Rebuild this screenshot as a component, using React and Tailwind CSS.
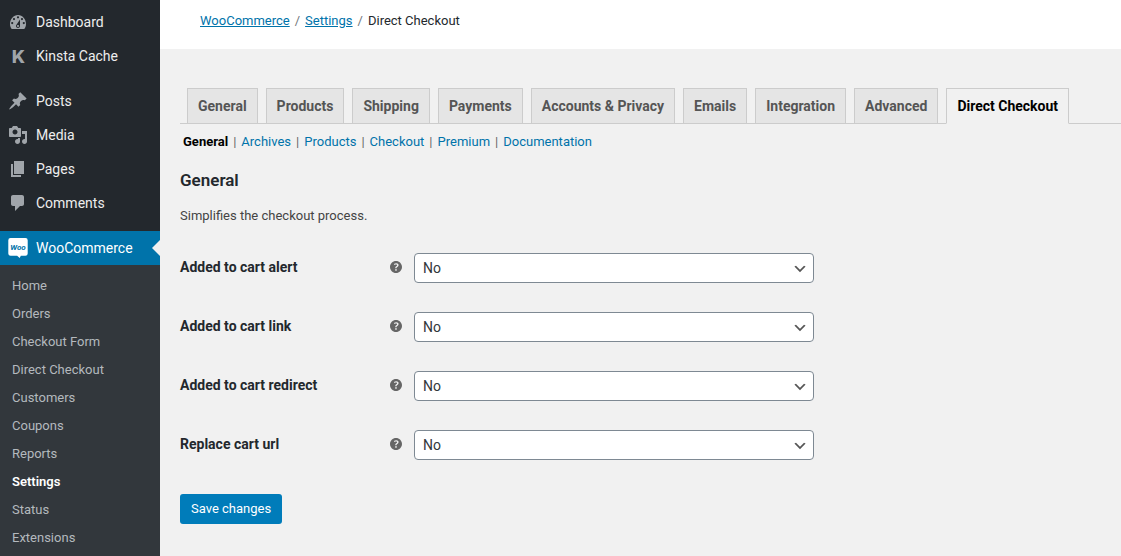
import React, { useState } from "react";

const DashboardIcon = () => (
  <svg viewBox="0 0 20 20" className="w-5 h-5 fill-current" aria-hidden="true">
    <path fillRule="evenodd" d="M3.76 17h12.48c1.1-1.37 1.76-3.11 1.76-5 0-4.970-3.580-9-8-9s-8 4.030-8 9c0 1.890.660 3.630 1.760 5zM10 4.200a1.100 1.100 0 1 1 0 2.200 1.100 1.100 0 0 1 0-2.200zM6 6a1.100 1.100 0 1 1 0 2.200A1.100 1.100 0 0 1 6 6zm8 0a1.100 1.100 0 1 1 0 2.200A1.100 1.100 0 0 1 14 6zm-5.370 6.550L12 7.500V14c0 1.100-.9 2-2 2s-2-.9-2-2c0-.570.240-1.080.630-1.450zM4.200 10a1.100 1.100 0 1 1 0 2.200 1.100 1.100 0 0 1 0-2.200zm11.600 0a1.100 1.100 0 1 1 0 2.200 1.100 1.100 0 0 1 0-2.200zM11 14c0-.550-.450-1-1-1s-1 .450-1 1 .450 1 1 1 1-.450 1-1z" />
  </svg>
);

const KinstaIcon = () => (
  <svg viewBox="0 0 20 20" className="w-5 h-5 fill-current" aria-hidden="true">
    <text x="10.500" y="16.500" textAnchor="middle" fontSize="18" fontWeight="800" fontFamily="Inter, sans-serif">K</text>
  </svg>
);

const PostsIcon = () => (
  <svg viewBox="0 0 20 20" className="w-5 h-5 fill-current" aria-hidden="true">
    <path d="M10.44 3.02l1.82-1.82 6.36 6.35-1.83 1.82c-1.05-.68-2.48-.57-3.41.36l-.75.75c-.92.93-1.04 2.35-.35 3.41l-1.83 1.82-2.41-2.41-2.8 2.79c-.42.42-3.38 2.71-3.8 2.29s1.86-3.39 2.28-3.81l2.79-2.79L4.1 9.36l1.83-1.82c1.05.69 2.48.57 3.4-.36l.75-.75c.93-.92 1.05-2.35.36-3.41z" />
  </svg>
);

const MediaIcon = () => (
  <svg viewBox="0 0 20 20" className="w-5 h-5 fill-current" aria-hidden="true">
    <path fillRule="evenodd" d="M13 11V4c0-.55-.45-1-1-1h-1.67L9 1H5L3.67 3H2c-.55 0-1 .45-1 1v7c0 .55.45 1 1 1h10c.55 0 1-.45 1-1zM7 4.5c1.38 0 2.5 1.12 2.5 2.5S8.38 9.5 7 9.5 4.5 8.38 4.5 7 5.62 4.5 7 4.5zM14 6h5v10.5c0 1.38-1.12 2.5-2.5 2.5S14 17.88 14 16.5s1.12-2.5 2.5-2.5c.17 0 .34.02.5.05V9h-3V6zm-4 8.05V13h2v3.5c0 1.38-1.12 2.5-2.5 2.5S7 17.88 7 16.5 8.12 14 9.5 14c.17 0 .34.02.5.05z" />
  </svg>
);

const PagesIcon = () => (
  <svg viewBox="0 0 20 20" className="w-5 h-5 fill-current" aria-hidden="true">
    <path d="M6 15V2h10v13H6zm-1 1h8v2H3V5h2v11z" />
  </svg>
);

const CommentsIcon = () => (
  <svg viewBox="0 0 20 20" className="w-5 h-5 fill-current" aria-hidden="true">
    <path d="M5 2h9c1.1 0 2 .9 2 2v7c0 1.1-.9 2-2 2h-2l-5 5v-5H5c-1.1 0-2-.9-2-2V4c0-1.1.9-2 2-2z" />
  </svg>
);

const WooIcon = () => (
  <svg viewBox="0 0 20 20" className="w-5 h-5" aria-hidden="true">
    <path fill="#fff" d="M2.5 0h15A2.2 2.2 0 0 1 19.7 2.2v13.3a2.2 2.2 0 0 1-2.2 2.2h-4.7l-1.1 2.3-2.6-2.3H2.5A2.2 2.2 0 0 1 .3 15.5V2.2A2.2 2.2 0 0 1 2.5 0z" />
    <text x="10" y="12" textAnchor="middle" fontSize="8" fontWeight="700" fontStyle="italic" fill="#0073aa" fontFamily="Roboto, sans-serif">Woo</text>
  </svg>
);

const HelpIcon = () => (
  <svg viewBox="3 3 14 14" className="w-3 h-3 fill-[#666]" role="img" aria-label="Help">
    <path d="M17 10c0-3.87-3.14-7-7-7-3.87 0-7 3.13-7 7s3.13 7 7 7c3.86 0 7-3.13 7-7zm-6.3 1.48H9.14v-.43c0-.38.08-.7.24-.98s.46-.57.88-.89c.41-.29.68-.53.81-.71.14-.18.2-.39.2-.62 0-.25-.09-.44-.28-.58-.19-.13-.45-.19-.79-.19-.58 0-1.25.19-2 .57l-.64-1.28c.87-.49 1.8-.74 2.77-.74.81 0 1.45.2 1.92.58.48.39.71.91.71 1.55 0 .43-.09.8-.29 1.11-.19.32-.57.67-1.11 1.06-.38.28-.61.49-.71.63-.1.15-.15.34-.15.57v.35zm-1.47 2.74c-.18-.17-.27-.42-.27-.73 0-.33.08-.58.26-.75s.43-.25.77-.25c.32 0 .57.09.75.26s.27.42.27.74c0 .3-.09.55-.27.72-.18.18-.43.27-.75.27-.33 0-.58-.09-.76-.26z" />
  </svg>
);

const menuGroups = [
  [
    { label: "Dashboard", Icon: DashboardIcon },
    { label: "Kinsta Cache", Icon: KinstaIcon },
  ],
  [
    { label: "Posts", Icon: PostsIcon },
    { label: "Media", Icon: MediaIcon },
    { label: "Pages", Icon: PagesIcon },
    { label: "Comments", Icon: CommentsIcon },
  ],
];

const subMenu = [
  "Home", "Orders", "Checkout Form", "Direct Checkout", "Customers",
  "Coupons", "Reports", "Settings", "Status", "Extensions",
];

const tabs = [
  "General", "Products", "Shipping", "Payments", "Accounts & Privacy",
  "Emails", "Integration", "Advanced", "Direct Checkout",
];

const sections = ["General", "Archives", "Products", "Checkout", "Premium", "Documentation"];

const fields = [
  { name: "cart_alert", label: "Added to cart alert" },
  { name: "cart_link", label: "Added to cart link" },
  { name: "cart_redirect", label: "Added to cart redirect" },
  { name: "cart_url", label: "Replace cart url" },
];

function Sidebar() {
  return (
    <nav className="w-40 shrink-0 bg-[#23282d] pt-[5px] text-sm text-[#eee]">
      {menuGroups.map((group, idx) => (
        <ul key={idx} className="mb-[11px]">
          {group.map(({ label, Icon }) => (
            <li key={label}>
              <a href="#" className="flex h-[34px] items-center gap-2 px-2 hover:text-[#00b9eb]">
                <span className="text-[#a0a5aa]"><Icon /></span>
                {label}
              </a>
            </li>
          ))}
        </ul>
      ))}

      <a href="#" className="relative flex h-[34px] items-center gap-2 bg-[#0073aa] px-2 text-white">
        <WooIcon />
        WooCommerce
        {/* Arrow pointing at the current screen */}
        <span className="absolute right-0 top-1/2 -translate-y-1/2 border-8 border-l-0 border-transparent border-r-[#f1f1f1]" />
      </a>
      <ul className="bg-[#32373c] py-[7px] text-[13px] text-[#b4b9be]">
        {subMenu.map((item) => (
          <li key={item}>
            <a
              href="#"
              className={
                item === "Settings"
                  ? "flex h-7 items-center px-3 font-semibold text-white"
                  : "flex h-7 items-center px-3 hover:text-[#00b9eb]"
              }
            >
              {item}
            </a>
          </li>
        ))}
      </ul>
    </nav>
  );
}

function App() {
  const [tab, setTab] = useState("Direct Checkout");
  const [section, setSection] = useState("General");
  const [formData, setFormData] = useState({
    cart_alert: "no",
    cart_link: "no",
    cart_redirect: "no",
    cart_url: "no",
  });

  const handleChange = (e) => {
    const { name, value } = e.target;
    setFormData({ ...formData, [name]: value });
  };

  return (
    <div className="flex h-screen overflow-hidden bg-[#f1f1f1] font-[Roboto,sans-serif] text-[13px] text-[#444]">
      <Sidebar />

      <main className="min-w-0 flex-1">
        <header className="flex h-[49px] items-start gap-[5px] bg-white px-10 pt-[11px] leading-5">
          <a href="#" className="text-[#0073aa] underline">WooCommerce</a>
          <span className="text-[#72777c]">/</span>
          <a href="#" className="text-[#0073aa] underline">Settings</a>
          <span className="text-[#72777c]">/</span>
          <span className="text-[#23282d]">Direct Checkout</span>
        </header>

        <div className="pl-5 pt-[39px]">
          <div className="flex gap-2 border-b border-[#ccc] pl-[7px]">
            {tabs.map((t) => (
              <button
                key={t}
                type="button"
                onClick={() => setTab(t)}
                className={
                  t === tab
                    ? "-mb-px h-9 whitespace-nowrap border border-[#ccc] border-b-[#f1f1f1] bg-[#f1f1f1] px-2.5 text-sm font-bold text-black"
                    : "-mb-px h-9 whitespace-nowrap border border-[#ccc] bg-[#e5e5e5] px-2.5 text-sm font-bold text-[#555]"
                }
              >
                {t}
              </button>
            ))}
          </div>

          <ul className="flex pl-[3px] pt-2 leading-5">
            {sections.map((s, idx) => (
              <li key={s} className="flex">
                <a
                  href="#"
                  onClick={() => setSection(s)}
                  className={s === section ? "font-bold text-black" : "text-[#0073aa]"}
                >
                  {s}
                </a>
                {idx < sections.length - 1 && <span className="px-[5px] text-[#666]">|</span>}
              </li>
            ))}
          </ul>

          <h2 className="mt-4 text-[17px] font-semibold leading-6 text-[#23282d]">General</h2>
          <p className="mt-3.5 leading-5">Simplifies the checkout process.</p>

          <form onSubmit={(e) => e.preventDefault()} className="mt-[27px] pr-5">
            <div className="flex flex-col gap-[29px]">
              {fields.map(({ name, label }) => (
                <div key={name} className="flex items-center">
                  <div className="flex w-[222px] shrink-0 items-center justify-between pb-0.5">
                    <label htmlFor={name} className="text-sm font-bold text-[#23282d]">{label}</label>
                    <HelpIcon />
                  </div>
                  <div className="relative ml-3 w-full max-w-[400px]">
                    <select
                      id={name}
                      name={name}
                      value={formData[name]}
                      onChange={handleChange}
                      className="block h-[30px] w-full appearance-none rounded border border-[#7e8993] bg-white pl-2 pr-6 text-sm text-[#32373c]"
                    >
                      <option value="no">No</option>
                      <option value="yes">Yes</option>
                    </select>
                    <svg viewBox="0 0 20 20" className="pointer-events-none absolute right-1.5 top-2 h-4 w-4 fill-[#555]" aria-hidden="true">
                      <path d="M5 6l5 5 5-5 2 1-7 7-7-7 2-1z" />
                    </svg>
                  </div>
                </div>
              ))}
            </div>

            <button type="submit" className="mt-[34px] h-[30px] rounded-[3px] bg-[#007cba] px-[11px] text-white">
              Save changes
            </button>
          </form>
        </div>
      </main>
    </div>
  );
}

export default App;
